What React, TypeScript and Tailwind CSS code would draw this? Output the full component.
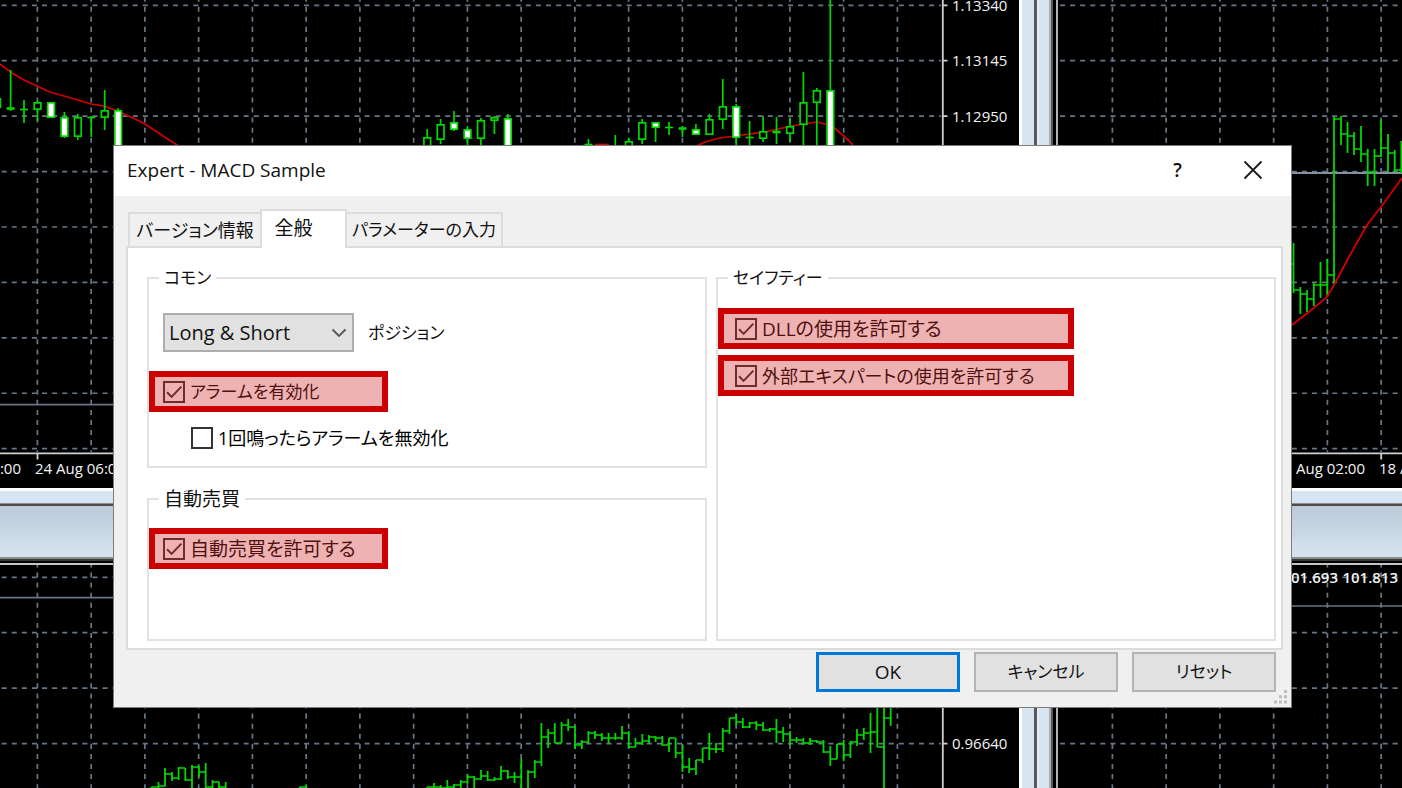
import { useState, type ReactNode } from "react";

type Candle = [x: number, high: number, low: number, top: number, bottom: number, kind: "up" | "down" | "doji"];
type Bar = [x: number, high: number, low: number, close: number];

const CANDLES: Candle[] = [
  [-3, 98, 108, 98, 108, "up"],
  [10.6, 70, 111, 107, 110, "doji"],
  [24, 100, 123, 109, 110, "doji"],
  [37.5, 101, 121, 102, 110, "up"],
  [51, 102, 118, 102, 118, "down"],
  [64.4, 112, 138, 117, 137, "down"],
  [77.8, 114, 140, 117, 137, "up"],
  [91.3, 116, 137, 117, 118, "doji"],
  [104.7, 90, 130, 110, 118, "up"],
  [118.1, 108, 150, 110, 150, "down"],
  [427.2, 129, 150, 137, 150, "up"],
  [440.6, 119, 144, 124, 140, "up"],
  [454, 111, 131, 122, 130, "down"],
  [467.5, 126, 150, 129, 139, "down"],
  [480.9, 118, 150, 120, 139, "up"],
  [494.4, 116, 134, 117, 121, "up"],
  [507.8, 114, 150, 118, 150, "down"],
  [588.5, 139, 150, 144, 146, "doji"],
  [615.3, 135, 150, 148, 150, "doji"],
  [628.8, 138, 150, 141, 150, "up"],
  [642.2, 119, 144, 122, 140, "up"],
  [655.6, 122, 142, 122, 128, "down"],
  [669, 122, 135, 127, 128, "doji"],
  [682.5, 126, 137, 127, 130, "doji"],
  [695.9, 124, 135, 129, 135, "down"],
  [709.4, 114, 135, 119, 135, "up"],
  [722.8, 79, 129, 106, 120, "up"],
  [736.2, 104, 150, 106, 138, "down"],
  [749.6, 121, 150, 137, 138, "doji"],
  [763.1, 116, 142, 131, 139, "up"],
  [776.5, 117, 144, 131, 133, "doji"],
  [790, 118, 142, 126, 134, "up"],
  [803.4, 72, 150, 102, 125, "up"],
  [816.8, 88, 150, 90, 103, "up"],
  [830.3, -5, 150, 90, 150, "down"],
];

const BARS_TOP_RIGHT: Bar[] = [
  [1286.8, 250, 280, 264], [1293.5, 243, 293, 290], [1300.3, 287, 314, 294], [1307, 290, 312, 299],
  [1313.8, 283, 306, 285], [1320.5, 262, 298, 285], [1327.3, 259, 297, 275], [1334, 117, 284, 119],
  [1341, 116, 145, 134], [1347.5, 122, 153, 136], [1354, 132, 155, 149], [1361, 126, 162, 154],
  [1367.7, 149, 186, 172], [1374.5, 149, 186, 156], [1381, 120, 157, 148], [1388, 134, 172, 153],
  [1394.7, 150, 172, 170], [1401.3, 141, 173, 160],
];

const BARS_BOTTOM_LEFT: Bar[][] = [
  [
    [151.5, 787, 800, 787], [158.5, 782, 800, 786], [165, 768, 786, 774], [172, 772, 781, 778], [178.6, 767, 780, 768],
    [185.3, 768, 781, 780], [192, 765, 800, 767], [199, 766, 777, 772], [205.7, 763, 800, 787], [212.5, 780, 800, 782],
    [219, 782, 800, 787], [225.7, 782, 800, 795],
  ],
  [[299.6, 787, 800, 787], [306.3, 785, 800, 795]],
  [
    [427.2, 787, 800, 787], [434, 783, 800, 787], [440.6, 785, 800, 788], [447.3, 780, 800, 787], [454, 784, 800, 785],
    [460.8, 780, 800, 782], [467.5, 774, 784, 777], [474.2, 776, 800, 779], [481, 770, 780, 776], [487.6, 771, 781, 780],
    [494.4, 777, 781, 779], [501, 766, 780, 771], [507.8, 770, 779, 777], [514.5, 772, 783, 777], [521.3, 759, 800, 795],
    [528, 770, 800, 772], [534.8, 760, 778, 762], [541.4, 723, 766, 737], [548.2, 729, 748, 733], [554.8, 723, 743, 743],
    [561.6, 722, 743, 725], [568.2, 719, 731, 727], [575, 726, 749, 745], [581.8, 740, 749, 742], [588.4, 731, 743, 733],
    [595, 731, 739, 735], [601.8, 733, 741, 738], [608.6, 733, 743, 738], [615.4, 733, 740, 738], [622, 726, 740, 733],
    [628.8, 731, 748, 747], [635.5, 738, 747, 743], [642.3, 734, 745, 741], [649, 735, 743, 737], [655.6, 736, 742, 738],
    [662.3, 736, 746, 745], [669, 738, 752, 738], [675.7, 738, 758, 753], [682.5, 745, 772, 767], [689.2, 758, 773, 769],
    [696, 760, 775, 760], [702.6, 748, 763, 748], [709.3, 733, 760, 749], [716, 743, 753, 749], [722.8, 728, 752, 731],
    [729.5, 718, 734, 718], [736.2, 714, 725, 722], [742.8, 718, 728, 727], [749.6, 722, 728, 723], [756.3, 721, 730, 725],
    [763, 722, 731, 730], [769.8, 728, 732, 729], [776.4, 719, 743, 732], [783.2, 727, 742, 734], [790, 731, 745, 740],
    [796.6, 737, 743, 740], [803.3, 738, 745, 743], [810, 738, 745, 741], [816.8, 740, 743, 742], [823.5, 740, 753, 752],
    [830.3, 746, 766, 759], [837, 744, 759, 744], [843.7, 740, 761, 755], [850.4, 741, 758, 742], [857, 729, 746, 735],
    [863.8, 728, 740, 733], [870.5, 713, 753, 732], [877.3, 700, 747, 747], [884, 700, 800, 718], [890.7, 700, 726, 718],
  ],
];

const GREEN = "#00d800";
const SLATE = "#677686";
const CHART_FONT = "'Open Sans', 'Noto Sans', sans-serif";

function range(from: number, count: number, step: number) {
  return Array.from({ length: count }, (_, i) => from + i * step);
}

function Grid({ xs, ys, x1, x2, y1, y2, dashY }: { xs: number[]; ys: number[]; x1: number; x2: number; y1: number; y2: number; dashY: number }) {
  return (
    <g stroke={SLATE} strokeWidth={1.7} strokeDasharray="5.04 5.04">
      {ys.map((y) => (
        <line key={y} x1={x1} x2={x2} y1={y} y2={y} />
      ))}
      {xs.map((x) => (
        <line key={x} x1={x} x2={x} y1={y1} y2={y2} strokeDashoffset={dashY} />
      ))}
    </g>
  );
}

function Candles({ data }: { data: Candle[] }) {
  return (
    <g stroke={GREEN} strokeWidth={1.7}>
      {data.map(([x, high, low, top, bottom, kind]) => (
        <g key={x}>
          <line x1={x} x2={x} y1={high} y2={low} />
          {kind === "doji" ? (
            <line x1={x - 4} x2={x + 4} y1={(top + bottom) / 2} y2={(top + bottom) / 2} strokeWidth={bottom - top > 1 ? 2.6 : 1.6} />
          ) : (
            <rect x={x - 3.3} y={top + 0.8} width={6.7} height={bottom - top - 1.6} fill={kind === "up" ? "#000000" : "#ffffff"} />
          )}
        </g>
      ))}
    </g>
  );
}

function Bars({ data }: { data: Bar[] }) {
  return (
    <g stroke={GREEN} strokeWidth={1.8}>
      {data.map(([x, high, low, close], i) => (
        <g key={x}>
          <line x1={x} x2={x} y1={high} y2={low} />
          {i < data.length - 1 && <line x1={x} x2={x + 6.7} y1={close} y2={close} strokeWidth={1.5} />}
        </g>
      ))}
    </g>
  );
}

function TopLeftChart() {
  return (
    <svg className="block h-full w-full" aria-label="Price chart" fill="none">
      <Grid xs={range(37.4, 17, 53.75)} ys={range(5.3, 9, 55.42)} x1={1.7} x2={941} y1={-3.4} y2={452} dashY={0} />
      <line x1={0} x2={942} y1={404.7} y2={404.7} stroke={SLATE} strokeWidth={1.7} />
      <g stroke="#d40000" strokeWidth={1.7}>
        <polyline points="0,64 12,73 24,80 37,86 50,92 64,96 78,100 91,104 104,106 115,110 133,118 145,124 160,134 177,145 190,152" />
        <polyline points="690,149 705,142 720,138 735,136 765,132 787,127 803,124 817,122 832,126 845,137 853,145" />
        <line x1={595} x2={609} y1={144.5} y2={144.5} />
      </g>
      <Candles data={CANDLES} />
      <g stroke="#cfcfcf" strokeWidth={1.8}>
        <line x1={942.8} x2={942.8} y1={0} y2={454} />
        <line x1={0} x2={943} y1={453.3} y2={453.3} />
        <path d="M943 5.3h4.5M943 60.7h4.5M943 116.2h4.5M37.5 453v6.5" />
      </g>
      <g fill="#f4f4f4" fontFamily={CHART_FONT} fontSize={15} fontWeight={500}>
        <text x={952} y={11}>1.13340</text>
        <text x={952} y={66}>1.13145</text>
        <text x={952} y={122}>1.12950</text>
        <text x={21} y={474} textAnchor="end">23 Aug 22:00</text>
        <text x={35} y={474}>24 Aug 06:00</text>
      </g>
    </svg>
  );
}

function TopRightChart() {
  return (
    <svg className="block h-full w-full" aria-label="Price chart" fill="none">
      <g transform="translate(-1059 0)">
        <Grid xs={range(1112.4, 24, 53.75)} ys={range(5.3, 9, 55.42)} x1={1060} x2={2400} y1={-3.4} y2={452} dashY={0} />
        <line x1={1059} x2={2400} y1={172.9} y2={172.9} stroke="#8391a3" strokeWidth={2} />
        <Bars data={BARS_TOP_RIGHT} />
        <polyline points="1280,332 1292,325 1310,311 1327,297 1334,285 1350,255 1367,225 1381,207 1402,178" stroke="#d40000" strokeWidth={1.8} />
        <path d="M1059 453.3H2400M1381.2 453v6.5" stroke="#cfcfcf" strokeWidth={1.8} />
        <g fill="#f4f4f4" fontFamily={CHART_FONT} fontSize={15} fontWeight={500}>
          <text x={1365} y={474} textAnchor="end">17 Aug 02:00</text>
          <text x={1379} y={474}>18 Aug 10:00</text>
        </g>
      </g>
    </svg>
  );
}

function BottomLeftChart() {
  return (
    <svg className="block h-full w-full" aria-label="Price chart" fill="none">
      <g transform="translate(0 -565)">
        <Grid xs={range(37.4, 17, 53.75)} ys={range(577.3, 8, 55.42)} x1={1.7} x2={941} y1={562.4} y2={1200} dashY={0} />
        <line x1={0} x2={942} y1={597.7} y2={597.7} stroke={SLATE} strokeWidth={1.7} />
        {BARS_BOTTOM_LEFT.map((segment) => (
          <Bars key={segment[0][0]} data={segment} />
        ))}
        <path d="M942.8 565V1200M943 743.6h4.5" stroke="#cfcfcf" strokeWidth={1.8} />
        <text x={952} y={749} fill="#f4f4f4" fontFamily={CHART_FONT} fontSize={15} fontWeight={500}>0.96640</text>
      </g>
    </svg>
  );
}

function BottomRightChart() {
  return (
    <svg className="block h-full w-full" aria-label="Price chart" fill="none">
      <g transform="translate(-1059 -565)">
        <Grid xs={range(1112.4, 24, 53.75)} ys={range(577.3, 8, 55.42)} x1={1060} x2={2400} y1={562.4} y2={1200} dashY={0} />
        <line x1={1059} x2={2400} y1={606} y2={606} stroke={SLATE} strokeWidth={1.7} />
        <g fill="#f4f4f4" fontFamily={CHART_FONT} fontSize={15} fontWeight={600} textAnchor="end">
          <text x={1338} y={583}>101.693</text>
          <text x={1398} y={583}>101.813</text>
        </g>
      </g>
    </svg>
  );
}

/* Frame edge and caption bar of the chart windows in the lower row. */
function Caption() {
  return (
    <div className="flex h-full flex-col">
      <div className="h-[3px] bg-white" />
      <div className="h-3 bg-[#d7e4f2]" />
      <div className="h-px bg-[#8e8e8e]" />
      <div className="h-[2px] bg-[#4c4c4c]" />
      <div className="h-px bg-[#c8c8cc]" />
      <div className="flex-1 bg-linear-to-b from-[#bccad9] to-[#d7e4f0]" />
      <div className="h-[2px] bg-[#8a8d90]" />
      <div className="h-[2px] bg-[#3a3a3a]" />
      <div className="h-[2px] bg-black" />
      <div className="h-[2px] bg-[#c4c4c4]" />
    </div>
  );
}

function Workspace() {
  return (
    <div className="grid h-screen min-h-[600px] grid-cols-[1019px_40px_1fr] grid-rows-[488px_77px_1fr] overflow-hidden bg-black">
      <TopLeftChart />
      <div className="row-span-3 flex">
        <div className="w-[3px] bg-white" />
        <div className="w-[12px] bg-[#d7e4f2]" />
        <div className="w-[3px] bg-[#5c5856]" />
        <div className="w-[2px] bg-[#e3ecf5]" />
        <div className="w-[10px] bg-[#d7e4f2]" />
        <div className="w-[2px] bg-[#aab0b4]" />
        <div className="w-[2px] bg-[#5a5a5a]" />
        <div className="w-[3px] bg-black" />
        <div className="w-[2px] bg-[#b4b4b8]" />
      </div>
      <TopRightChart />
      <Caption />
      <Caption />
      <BottomLeftChart />
      <BottomRightChart />
    </div>
  );
}

function Check({ label, checked, marked = false, className = "text-[19px]" }: { label: string; checked: boolean; marked?: boolean; className?: string }) {
  const [on, setOn] = useState(checked);
  return (
    <label className={`flex items-center gap-[5px] ${marked ? "text-[#4f1010]" : "text-black"} ${className}`}>
      <span className="relative flex size-[22px]">
        <input
          type="checkbox"
          checked={on}
          onChange={(e) => setOn(e.target.checked)}
          className={
            marked
              ? "size-[22px] appearance-none border-2 border-[#6e2c2c] bg-transparent"
              : "size-[22px] appearance-none border-2 border-[#333333] bg-white"
          }
        />
        {on && (
          <svg viewBox="0 0 22 22" className="pointer-events-none absolute inset-0 size-[22px]" fill="none" stroke="#6e2c2c" strokeWidth="2">
            <path d="M4 11.3l4.6 4.6L18.4 5.6" />
          </svg>
        )}
      </span>
      <span>{label}</span>
    </label>
  );
}

function Highlight({ className, children }: { className: string; children: ReactNode }) {
  return <div className={`flex h-[41px] items-center border-6 border-[#cc0000] bg-[#efb2b2] ${className}`}>{children}</div>;
}

function Group({ title, titleClass, className, children }: { title: string; titleClass: string; className: string; children: ReactNode }) {
  return (
    <fieldset className={`min-w-0 border-2 border-[#e2e2e2] ${className}`}>
      <legend className={`ml-2.5 h-6 px-[5px] leading-6 ${titleClass}`}>{title}</legend>
      {children}
    </fieldset>
  );
}

function ExpertDialog() {
  return (
    <section
      role="dialog"
      aria-labelledby="dialog-title"
      className="absolute top-[145px] right-[110px] left-[113px] border border-[#7c7c7c] bg-[#f0f0f0] font-['Open_Sans','Noto_Sans_CJK_JP',sans-serif] text-[19px] leading-6 text-[#111111]"
    >
      <header className="flex h-[50px] items-center bg-white pr-px pb-[2px] pl-[13px]">
        <h1 id="dialog-title" className="flex-1">Expert - MACD Sample</h1>
        <button type="button" aria-label="Help" className="flex h-full w-[75px] items-center justify-center font-semibold">?</button>
        <button type="button" aria-label="Close" className="flex h-full w-[75px] items-center justify-center">
          <svg viewBox="0 0 20 20" className="size-5" fill="none" stroke="#1a1a1a" strokeWidth="1.8">
            <path d="M1.5 1.5l17 17M18.5 1.5l-17 17" />
          </svg>
        </button>
      </header>

      <div className="mr-2 ml-3 pt-[13px] [font-feature-settings:'palt']">
        <div role="tablist" className="relative flex items-end pl-[2px]">
          <button role="tab" aria-selected="false" type="button" className="h-[34px] w-[132px] border-2 border-r-0 border-b-0 border-[#dcdcdc] text-[18px] whitespace-nowrap">バージョン情報</button>
          <button role="tab" aria-selected="true" type="button" className="-mb-[2px] h-[39px] w-[87px] border-2 border-b-0 border-[#dcdcdc] bg-white pr-5 pb-1">全般</button>
          <button role="tab" aria-selected="false" type="button" className="h-[34px] w-[156px] border-2 border-b-0 border-l-0 border-[#dcdcdc] text-[17px] whitespace-nowrap">パラメーターの入力</button>
        </div>

        <div role="tabpanel" className="grid grid-cols-2 gap-x-[9px] border-2 border-[#dcdcdc] bg-white pt-[18px] pr-[5px] pb-[7px] pl-[19px]">
          <div className="flex flex-col gap-[19px]">
            <Group title="コモン" titleClass="text-[17px]" className="pb-4">
              <div className="flex items-center gap-3.5 pt-[23px] pl-3.5">
                <div className="relative w-[191px]">
                  <select id="position" defaultValue="both" className="block h-[39px] w-full appearance-none rounded-none border-2 border-[#adadad] bg-[#e1e1e1] pl-1 text-xl">
                    <option value="both">Long &amp; Short</option>
                    <option value="long">Long</option>
                    <option value="short">Short</option>
                  </select>
                  <svg viewBox="0 0 16 10" className="pointer-events-none absolute top-[15px] right-[7px] h-[10px] w-4" fill="none" stroke="#555555" strokeWidth="1.8">
                    <path d="M1.5 1.5L8 8l6.5-6.5" />
                  </svg>
                </div>
                <label htmlFor="position" className="text-[17px]">ポジション</label>
              </div>
              <Highlight className="mt-[19px] w-[239px] pl-2">
                <Check label="アラームを有効化" checked marked className="text-[17px]" />
              </Highlight>
              <div className="mt-3.5 pl-[42px]">
                <Check label="1回鳴ったらアラームを無効化" checked={false} className="text-[18px]" />
              </div>
            </Group>
            <Group title="自動売買" titleClass="text-[19px]" className="flex-1">
              <Highlight className="mt-[17px] w-[239px] pl-2">
                <Check label="自動売買を許可する" checked marked />
              </Highlight>
              <div className="h-[70px]" />
            </Group>
          </div>
          <Group title="セイフティー" titleClass="text-[17px]" className="">
            <div className="flex flex-col gap-1.5 pt-[18px]">
              <Highlight className="w-[356px] pl-[11px]">
                <Check label="DLLの使用を許可する" checked marked />
              </Highlight>
              <Highlight className="w-[356px] pl-[11px]">
                <Check label="外部エキスパートの使用を許可する" checked marked className="text-[18px]" />
              </Highlight>
            </div>
          </Group>
        </div>
      </div>

      <footer className="flex justify-end gap-3.5 pt-[2px] pr-[15px] pb-[15px] [font-feature-settings:'palt']">
        <button type="button" className="h-10 w-36 border-3 border-[#0078d7] bg-[#e1e1e1]">OK</button>
        <button type="button" className="h-10 w-36 border-2 border-[#b4b4b4] bg-[#e1e1e1] text-[17px]">キャンセル</button>
        <button type="button" className="h-10 w-36 border-2 border-[#b4b4b4] bg-[#e1e1e1] text-[17px]">リセット</button>
      </footer>

      <svg viewBox="0 0 14 14" className="absolute right-[3px] bottom-[3px] size-3.5" fill="#bdbdbd" aria-hidden="true">
        <path d="M10 0h3v3h-3zM5 5.2h3v3H5zM10 5.2h3v3h-3zM0 10.4h3v3H0zM5 10.4h3v3H5zM10 10.4h3v3h-3z" />
      </svg>
    </section>
  );
}

export default function App() {
  return (
    <main className="relative overflow-hidden bg-black">
      <Workspace />
      <ExpertDialog />
    </main>
  );
}
